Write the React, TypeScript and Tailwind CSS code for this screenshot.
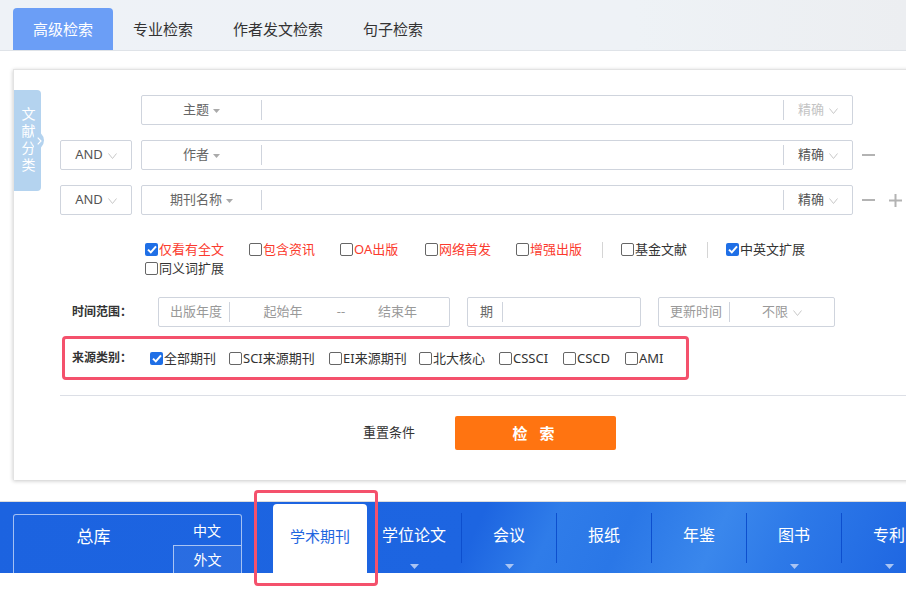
import React from 'react';

const font = { fontFamily: "'Noto Sans', 'Noto Sans CJK SC', sans-serif" };

function Caret() {
  return (
    <svg width="7" height="4" viewBox="0 0 7 4" className="ml-1 mt-[2px]">
      <path d="M0 0h7L3.5 4z" fill="#aaa" />
    </svg>
  );
}

function Vee() {
  return (
    <svg width="9" height="6" viewBox="0 0 9 6" className="ml-[5px] mt-[1px]">
      <path d="M0.5 0.5L4.5 5.5L8.5 0.5" fill="none" stroke="#c8c8c8" strokeWidth="1" />
    </svg>
  );
}

function Box({ checked }: { checked?: boolean }) {
  if (checked) {
    return (
      <span className="flex h-[13px] w-[13px] shrink-0 items-center justify-center rounded-[2px] bg-[#1f6fe6]">
        <svg width="10" height="9" viewBox="0 0 10 9">
          <path d="M1 4.6L3.8 7.4L9 1.4" fill="none" stroke="#fff" strokeWidth="2" />
        </svg>
      </span>
    );
  }
  return <span className="h-[13px] w-[13px] shrink-0 rounded-[2px] border border-[#666] bg-white" />;
}

function Check({ label, checked, red, w }: { label: string; checked?: boolean; red?: boolean; w?: number }) {
  return (
    <label
      className={`flex shrink-0 items-center gap-[1px] text-[13px] leading-[19px] ${red ? 'text-[#fb3a2d]' : 'text-[#333]'}`}
      style={w ? { width: w } : undefined}
    >
      <Box checked={checked} />
      <span>{label}</span>
    </label>
  );
}

function Sep() {
  return <span className="mr-[18px] h-[16px] w-px shrink-0 bg-[#d5d5d5]" />;
}

function AndBox() {
  return (
    <div className="flex h-[30px] w-[72px] shrink-0 items-center justify-center rounded-[2px] border border-[#cfd4dd] text-[13px] text-[#555]">
      AND
      <Vee />
    </div>
  );
}

function Field({ label, dim }: { label: string; dim?: boolean }) {
  return (
    <div className="flex h-[30px] w-[712px] shrink-0 items-center rounded-[2px] border border-[#cfd4dd]">
      <div className="flex w-[119px] items-center justify-center text-[13px] text-[#666]">
        {label}
        <Caret />
      </div>
      <div className="h-[20px] w-px bg-[#cfd4dd]" />
      <div className="flex-1" />
      <div className="h-[20px] w-px bg-[#cfd4dd]" />
      <div className={`flex w-[68px] items-center justify-center text-[13px] ${dim ? 'text-[#c4c4c4]' : 'text-[#555]'}`}>
        精确
        <Vee />
      </div>
    </div>
  );
}

function Minus() {
  return <span className="h-[2px] w-[13px] shrink-0 bg-[#b3b3b3]" />;
}

function Plus() {
  return (
    <svg width="13" height="13" viewBox="0 0 13 13">
      <path d="M0 6.5h13M6.5 0v13" stroke="#b3b3b3" strokeWidth="2" />
    </svg>
  );
}

function Tri() {
  return (
    <svg width="9" height="5" viewBox="0 0 9 5">
      <path d="M0 0h9L4.5 5z" fill="#a9c4f3" />
    </svg>
  );
}

const navItems = [
  { name: '学位论文', more: true },
  { name: '会议', more: true },
  { name: '报纸', more: false },
  { name: '年鉴', more: false },
  { name: '图书', more: true },
  { name: '专利', more: true },
];

const sources = [
  { name: '全部期刊', w: 79, checked: true },
  { name: 'SCI来源期刊', w: 100 },
  { name: 'EI来源期刊', w: 90 },
  { name: '北大核心', w: 80 },
  { name: 'CSSCI', w: 64 },
  { name: 'CSCD', w: 62 },
  { name: 'AMI', w: 50 },
];

export default function App() {
  return (
    <div className="relative h-[610px] w-[906px] overflow-hidden bg-white" style={font}>
      {/* top tabs */}
      <div className="flex h-[51px] items-end border-b border-[#dfe3e8] bg-[linear-gradient(90deg,#eef2f7,#eef2f6_70%,#eceef1)] pl-[13px]">
        <div className="flex h-[42px] w-[100px] items-center justify-center rounded-t-[4px] bg-[#6b9ef6] text-[15px] text-white">
          高级检索
        </div>
        {['专业检索', '作者发文检索', '句子检索'].map((t) => (
          <div key={t} className="flex h-[42px] items-center px-5 text-[15px] text-[#333]">
            {t}
          </div>
        ))}
      </div>

      {/* search card */}
      <div className="relative ml-[13px] mt-[18px] h-[411px] w-[905px] border-l border-t border-[#e3e3e3] bg-white pl-[46px] pt-[25px] shadow-[0_1px_4px_rgba(0,0,0,0.22)]">
        <div className="absolute left-0 top-[20px] flex h-[101px] w-[27px] items-center justify-center rounded-r-[4px] bg-[#b4d3ef] text-white">
          <span className="text-[14px] leading-[14px] tracking-[3px] [writing-mode:vertical-rl]">文献分类</span>
          <span className="absolute left-[20px] top-[41px] flex h-[19px] w-[10px] items-center justify-center rounded-r-full bg-[#b4d3ef]">
            <svg width="5" height="8" viewBox="0 0 5 8">
              <path d="M0.7 0.7L4 4L0.7 7.3" fill="none" stroke="#fff" strokeWidth="1.2" />
            </svg>
          </span>
        </div>

        <div className="flex flex-col gap-[15px]">
          <div className="flex items-center gap-[9px]">
            <div className="w-[72px] shrink-0" />
            <Field label="主题" dim />
          </div>
          <div className="flex items-center gap-[9px]">
            <AndBox />
            <Field label="作者" />
            <Minus />
          </div>
          <div className="flex items-center gap-[9px]">
            <AndBox />
            <Field label="期刊名称" />
            <Minus />
            <span className="ml-[5px]">
              <Plus />
            </span>
          </div>
        </div>

        <div className="ml-[85px] mt-[25px] flex flex-col">
          <div className="flex items-center">
            <Check label="仅看有全文" checked red w={104} />
            <Check label="包含资讯" red w={91} />
            <Check label="OA出版" red w={85} />
            <Check label="网络首发" red w={91} />
            <Check label="增强出版" red w={86} />
            <Sep />
            <Check label="基金文献" w={86} />
            <Sep />
            <Check label="中英文扩展" checked />
          </div>
          <div className="flex">
            <Check label="同义词扩展" />
          </div>
        </div>

        <div className="ml-[12px] mt-[19px] flex items-center">
          <div className="w-[86px] shrink-0 text-[12px] font-bold text-[#333]">时间范围：</div>
          <div className="flex h-[30px] w-[292px] shrink-0 items-center rounded-[2px] border border-[#cfd4dd] text-[13px] text-[#999]">
            <span className="w-[70px] pl-[11px]">出版年度</span>
            <span className="h-[20px] w-px bg-[#cfd4dd]" />
            <span className="w-[106px] text-center">起始年</span>
            <span className="w-[10px] text-center">--</span>
            <span className="flex-1 text-center">结束年</span>
          </div>
          <div className="ml-[17px] flex h-[30px] w-[174px] shrink-0 items-center rounded-[2px] border border-[#cfd4dd] text-[13px]">
            <span className="w-[34px] pl-[12px] text-[#666]">期</span>
            <span className="h-[20px] w-px bg-[#cfd4dd]" />
          </div>
          <div className="ml-[17px] flex h-[30px] w-[177px] shrink-0 items-center rounded-[2px] border border-[#cfd4dd] text-[13px] text-[#999]">
            <span className="w-[70px] pl-[11px]">更新时间</span>
            <span className="h-[20px] w-px bg-[#cfd4dd]" />
            <span className="flex flex-1 items-center justify-center">
              不限
              <Vee />
            </span>
          </div>
        </div>

        <div className="ml-[2px] mt-[9px] flex h-[44px] w-[627px] items-center rounded-[4px] border-[3px] border-[#f4516c] pl-[7px]">
          <span className="w-[78px] shrink-0 text-[12px] font-bold text-[#333]">来源类别：</span>
          {sources.map((s) => (
            <Check key={s.name} label={s.name} checked={s.checked} w={s.w} />
          ))}
        </div>

        <div className="mt-[15px] h-px bg-[#dcdfe6]" />

        <div className="ml-[303px] mt-[20px] flex items-center">
          <span className="text-[13px] text-[#333]">重置条件</span>
          <button className="ml-[40px] h-[34px] w-[161px] rounded-[2px] bg-[#ff7411] text-[15px] font-bold tracking-[4px] text-white">
            检 索
          </button>
        </div>
      </div>

      {/* database nav bar */}
      <div className="mt-[21px] h-px bg-[#dcdcdc]" />
      <div className="flex h-[71px] items-end bg-[linear-gradient(115deg,#1c63e0_0%,#1d65e1_52%,#2f7ce9_60%,#2a77e7_68%,#3a87ec_78%,#2d79e8_86%,#1f67e2_100%)] pl-[13px]">
        <div className="flex h-[59px] w-[229px] shrink-0 rounded-t-[3px] border border-b-0 border-[rgba(255,255,255,0.6)] text-white">
          <div className="flex flex-1 items-start justify-center pt-[10px] text-[17px] leading-[24px]">总库</div>
          <div className="flex w-[68px] flex-col">
            <div className="flex h-[30px] items-center justify-center text-[14px]">中文</div>
            <div className="flex flex-1 items-center justify-center border-l border-t border-[rgba(255,255,255,0.6)] bg-[rgba(255,255,255,0.06)] text-[14px]">
              外文
            </div>
          </div>
        </div>
        <div className="ml-[31px] flex h-[69px] w-[94px] shrink-0 items-start justify-center rounded-t-[4px] bg-white pt-[21px] text-[15px] leading-[22px] text-[#1f66e0]">
          学术期刊
        </div>
        {navItems.map((n, i) => (
          <div key={n.name} className="flex h-[71px] shrink-0 items-center">
            {i > 0 && <span className="h-[50px] w-px bg-[#0d4fce]" />}
            <div className="flex h-[71px] w-[94px] flex-col items-center pt-[22px] text-[16px] leading-[22px] text-white">
              <span>{n.name}</span>
              {n.more && (
                <span className="mt-[18px]">
                  <Tri />
                </span>
              )}
            </div>
          </div>
        ))}
      </div>

      {/* highlight */}
      <div className="absolute left-[254px] top-[490px] h-[96px] w-[124px] rounded-[4px] border-[3px] border-[#f4516c]" />
    </div>
  );
}
